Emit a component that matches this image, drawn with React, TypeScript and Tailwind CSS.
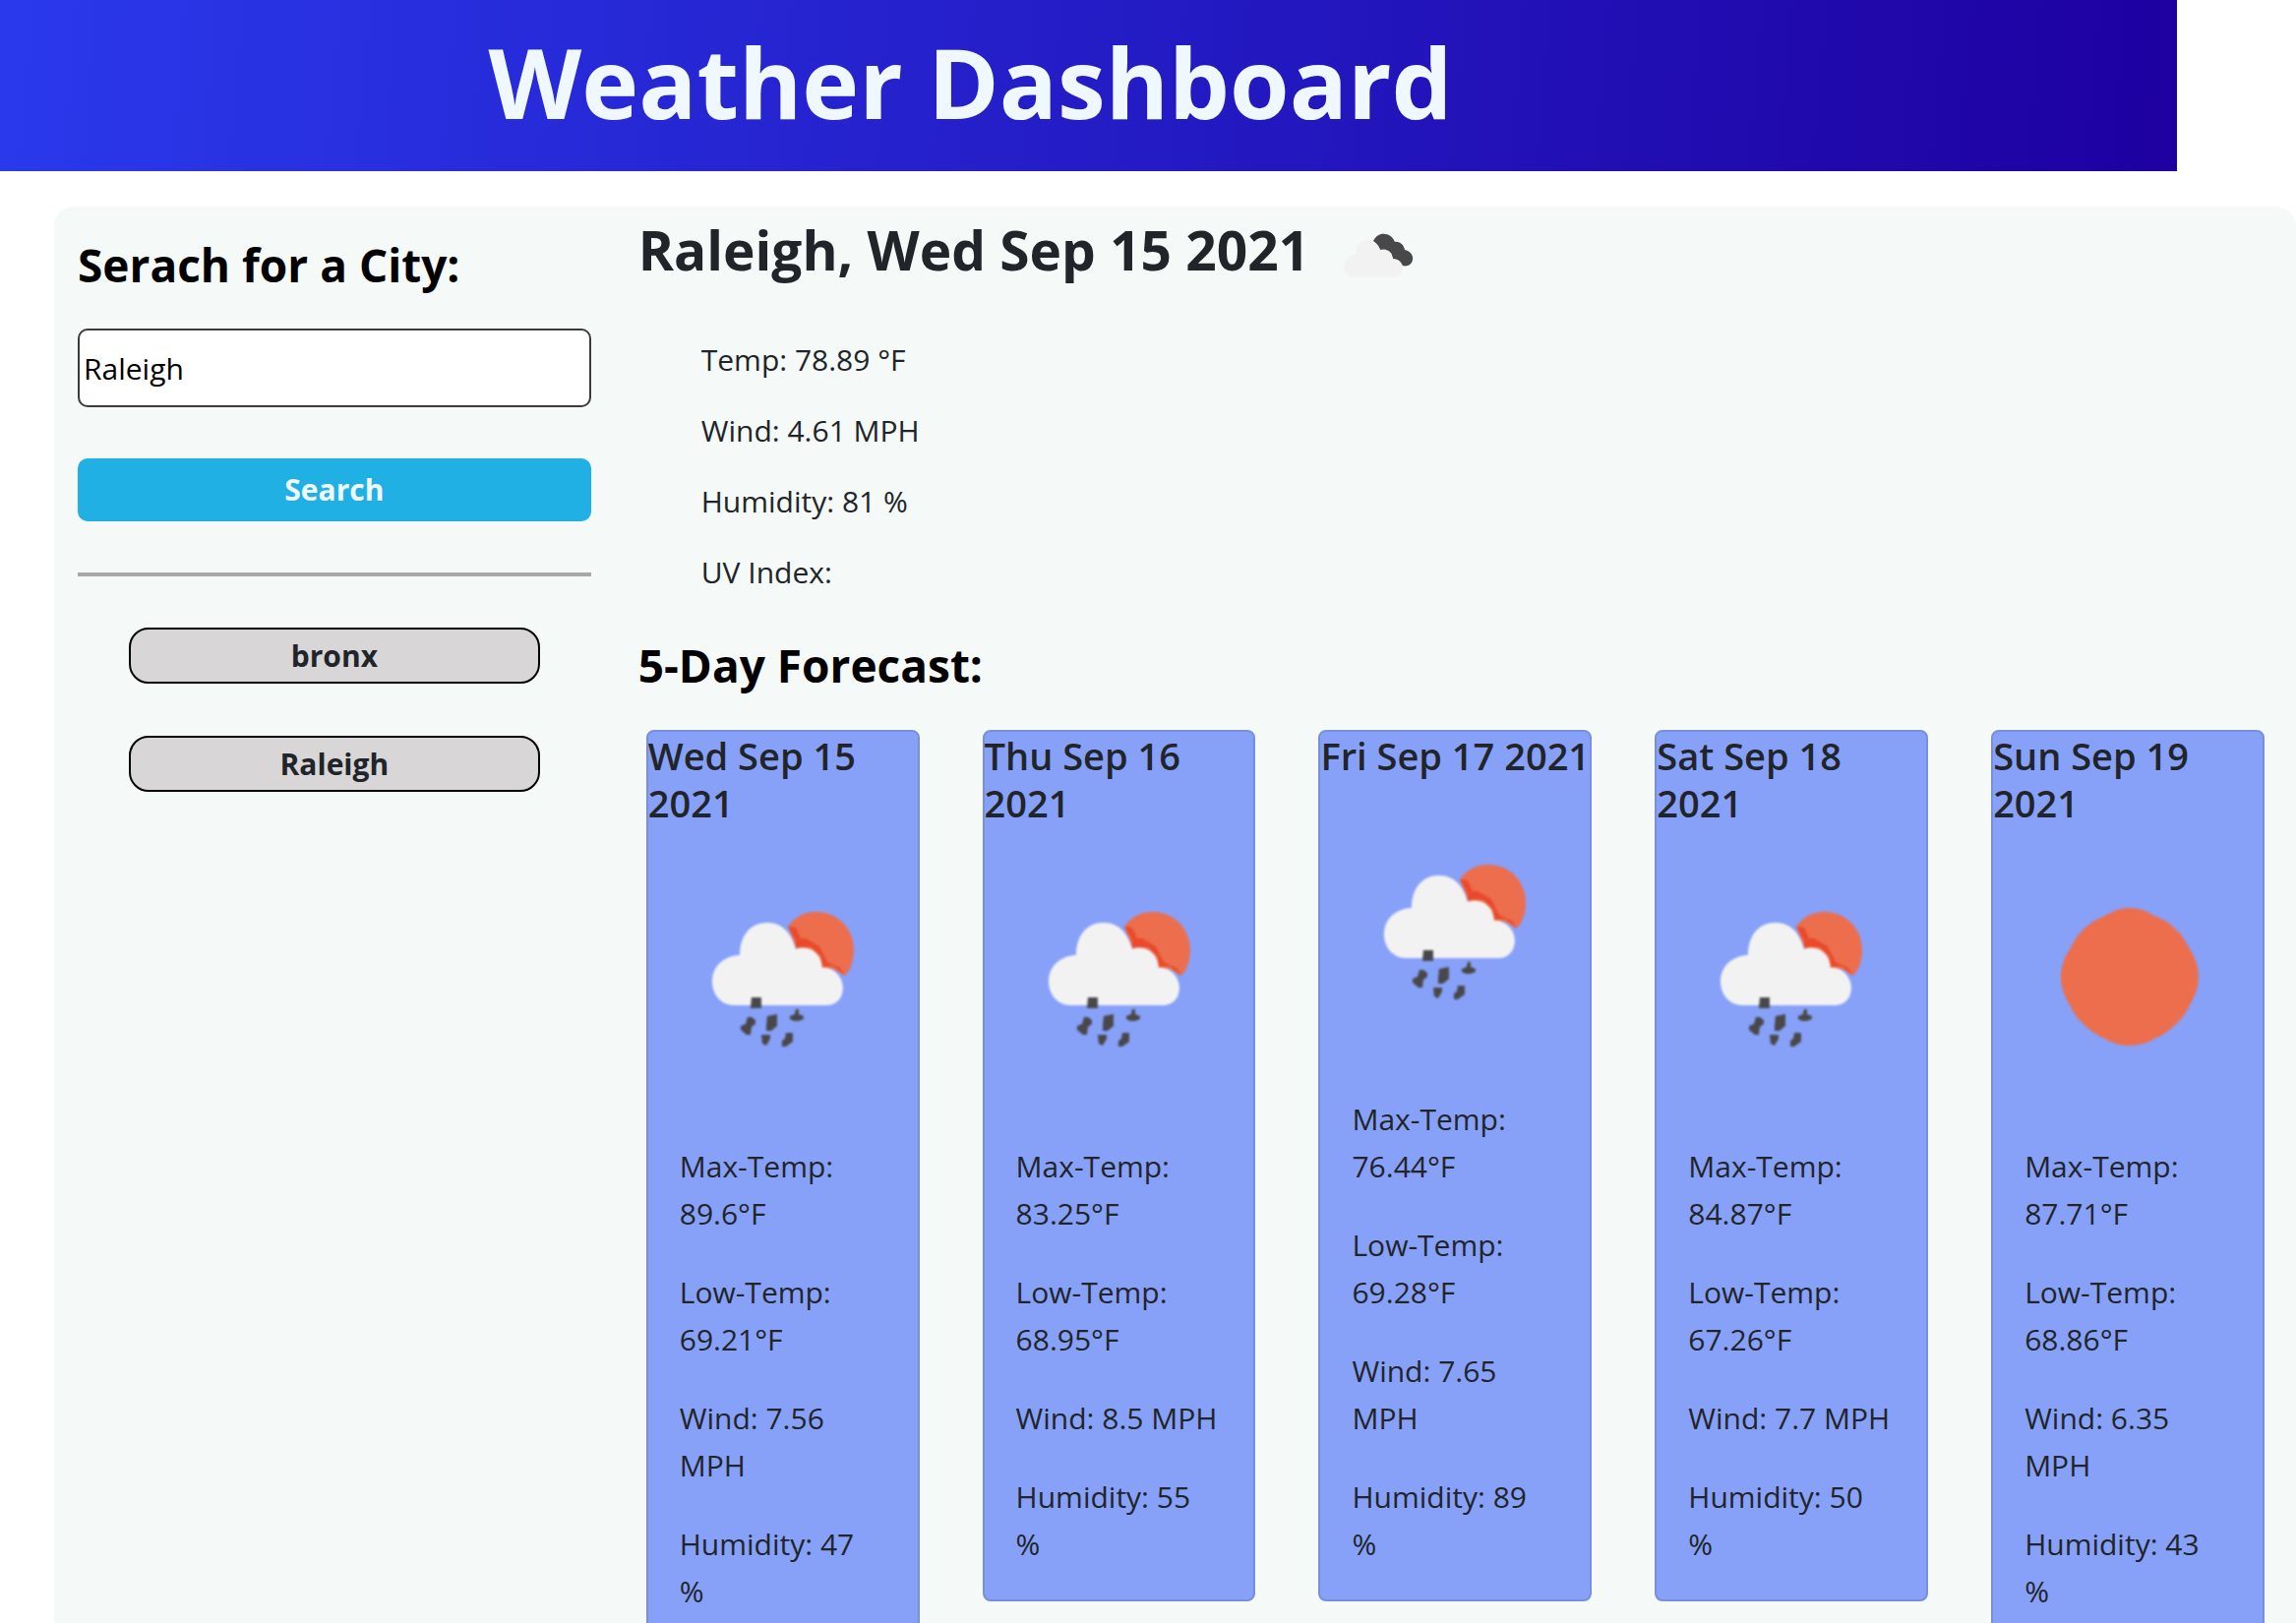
type Sky = "rain" | "sun" | "clouds";

function WeatherIcon({ sky, className }: { sky: Sky; className: string }) {
  if (sky === "clouds") {
    return (
      <svg viewBox="0 0 100 100" className={className} role="img" aria-label="Broken clouds">
        <path
          d="M45 35C48 29 53 27 57 28C61 28 65 31 67 36C72 35 76 39 77 44C82 45 86 49 85 54C84 60 78 62 72 59L65 54L63 47L55 44H52C51 40 48 37 45 35Z"
          fill="#48484a"
        />
        <path
          d="M26 72C19 72 15 67 15 61C15 54 20 49 27 48C27 39 33 34 39 34C45 34 49 38 52 44C59 42 64 46 65 53C71 53 76 58 75 64C75 69 71 72 66 72Z"
          fill="#f2f2f2"
        />
      </svg>
    );
  }
  if (sky === "sun") {
    return (
      <svg viewBox="0 0 274 274" className={className} role="img" aria-label="Clear sky">
        <path
          d="M139 67C148 67 156 70 164 75C172 78 179 82 185 88C192 94 196 101 200 109C205 116 209 127 209 137C209 148 205 157 200 166C196 174 192 180 185 186C179 192 172 197 164 200C156 205 148 207 139 207C130 207 122 205 114 200C106 197 99 192 93 186C86 180 82 174 78 166C73 157 69 148 69 137C69 127 73 116 78 109C82 101 86 94 93 88C99 82 106 78 114 75C122 70 130 67 139 67Z"
          fill="#ec6e4c"
          className="blur-[1px]"
        />
      </svg>
    );
  }
  return (
    <svg viewBox="0 0 274 274" className={className} role="img" aria-label="Rain">
      <g className="blur-[1px]">
        <path
          d="M142 86C150 75 160 71 171 71C192 71 209 88 209 109C209 119 207 128 200 136L188 129L175 128L169 114L151 109Z"
          fill="#ec6e4c"
        />
        <path d="M142 86L150 100L150 107L166 107L176 116L177 127L188 126L200 136L195 128L182 122L174 106L160 98L155 98L150 87Z" fill="#ea4a2b" />
        <path
          d="M87 166C74 166 65 155 65 142C65 127 76 116 93 115C93 95 104 82 121 82C136 82 146 93 150 109C164 104 176 113 177 128C189 127 198 138 198 148C198 159 191 166 182 166Z"
          fill="#f2f2f2"
        />
      </g>
      <g fill="#48484a" className="blur-[1px]">
        <path d="M105 158H115V169H104Z" />
        <path d="M101 178H105L109 181V185L105 188L104 196H100L94 191V187L99 185Z" />
        <path d="M121 177L131 175V187L125 192H120V187Z" />
        <path d="M150 170H153V175L158 177V180L153 182H148L144 180V177L149 175Z" />
        <path d="M115 196H124L124 200L120 207L116 205Z" />
        <path d="M140 194H147V203L140 208H136V202L139 200Z" />
      </g>
    </svg>
  );
}

const days: { date: string; sky: Sky; facts: string[] }[] = [
  { date: "Wed Sep 15\n2021", sky: "rain", facts: ["Max-Temp:\n89.6°F", "Low-Temp:\n69.21°F", "Wind: 7.56\nMPH", "Humidity: 47\n%"] },
  { date: "Thu Sep 16\n2021", sky: "rain", facts: ["Max-Temp:\n83.25°F", "Low-Temp:\n68.95°F", "Wind: 8.5 MPH", "Humidity: 55\n%"] },
  { date: "Fri Sep 17 2021", sky: "rain", facts: ["Max-Temp:\n76.44°F", "Low-Temp:\n69.28°F", "Wind: 7.65\nMPH", "Humidity: 89\n%"] },
  { date: "Sat Sep 18\n2021", sky: "rain", facts: ["Max-Temp:\n84.87°F", "Low-Temp:\n67.26°F", "Wind: 7.7 MPH", "Humidity: 50\n%"] },
  { date: "Sun Sep 19\n2021", sky: "sun", facts: ["Max-Temp:\n87.71°F", "Low-Temp:\n68.86°F", "Wind: 6.35\nMPH", "Humidity: 43\n%"] },
];

const current = ["Temp: 78.89 °F", "Wind: 4.61 MPH", "Humidity: 81 %", "UV Index:"];
const history = ["bronx", "Raleigh"];

export default function App() {
  return (
    <div className="flex min-h-screen flex-col bg-white font-['Open_Sans',sans-serif] text-[30px] leading-[48px] text-[#212529]">
      <header className="mr-[121px] bg-linear-[95deg,#2a39ec,#1e00a0] pt-6 pr-[240px] pb-8">
        <h1 className="text-center text-[98px] leading-[118px] font-bold text-[#f0f8ff]">Weather Dashboard</h1>
      </header>

      <main className="mt-9 ml-[55px] flex grow rounded-[20px] bg-[#f5f9f8]">
        <aside className="w-1/4 px-6 pt-[30px]">
          <form onSubmit={(e) => e.preventDefault()}>
            <label htmlFor="city" className="block text-[46px] leading-[58px] font-bold text-black">
              Serach for a City:
            </label>
            <input
              id="city"
              type="text"
              defaultValue="Raleigh"
              className="mt-9 block h-20 w-full rounded-[10px] border-2 border-[#3b3b3b] bg-white px-1 text-black"
            />
            <button type="submit" className="mt-[52px] block h-16 w-full rounded-[10px] bg-[#20b0e4] font-bold text-[#f0f8ff]">
              Search
            </button>
          </form>
          <hr className="mt-[52px] border-t-4 border-[#a9a7a7]" />
          <ul className="mt-[52px] flex flex-col items-center gap-[53px]">
            {history.map((city) => (
              <li key={city} className="w-4/5">
                <button type="button" className="block h-[57px] w-full rounded-[20px] border-2 border-black bg-[#d8d6d7] font-bold">
                  {city}
                </button>
              </li>
            ))}
          </ul>
        </aside>

        <div className="w-3/4">
          <section className="px-6">
            <div className="flex items-start gap-5">
              <h2 className="text-[55px] leading-[88px] font-bold">Raleigh, Wed Sep 15 2021</h2>
              <WeatherIcon sky="clouds" className="size-[100px]" />
            </div>
            <ul className="mt-8 space-y-6 pl-16">
              {current.map((fact) => (
                <li key={fact}>{fact}</li>
              ))}
            </ul>
            <h3 className="mt-10 text-[46px] leading-[60px] font-bold text-black">5-Day Forecast:</h3>
          </section>

          <div className="mt-9 grid grid-cols-5 items-start">
            {days.map((day) => (
              <div key={day.date} className="px-8">
                <article className="rounded-lg border-2 border-[#7890db] bg-[#88a1f8]">
                  <h4 className="text-[38px] leading-[48px] font-semibold whitespace-pre">{day.date}</h4>
                  <WeatherIcon sky={day.sky} className="my-4 block aspect-square w-full" />
                  <div className="space-y-8 px-8 pt-4 pb-8">
                    {day.facts.map((fact) => (
                      <p key={fact} className="whitespace-pre">
                        {fact}
                      </p>
                    ))}
                  </div>
                </article>
              </div>
            ))}
          </div>
        </div>
      </main>
    </div>
  );
}
